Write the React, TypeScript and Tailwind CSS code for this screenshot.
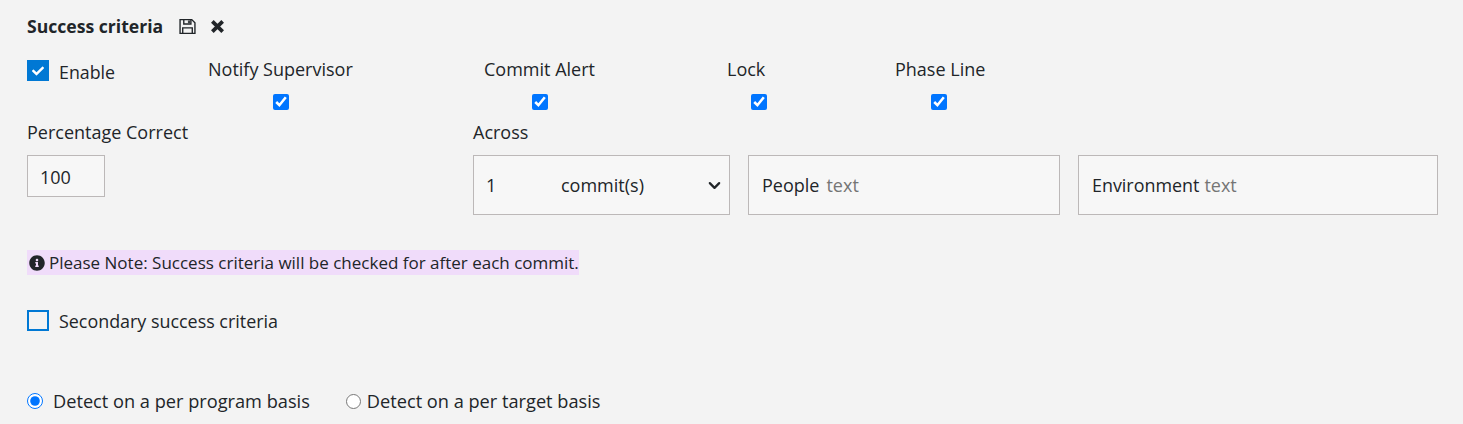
import { FaCheck, FaInfoCircle } from "react-icons/fa";

const flags = [
  { label: "Notify Supervisor", labelClass: "w-[276px]", boxClass: "ml-[65px]" },
  { label: "Commit Alert", labelClass: "w-[243px]", boxClass: "ml-[48px]" },
  { label: "Lock", labelClass: "w-[168px]", boxClass: "ml-[24px]" },
  { label: "Phase Line", labelClass: "w-[120px]", boxClass: "ml-[36px]" },
];

const App = () => {
  return (
    <main className="h-[424px] overflow-hidden bg-[#f3f3f3] pl-[27px] pr-[25px] pt-[13px] font-['Open_Sans',sans-serif] text-[18px] leading-[27px] text-[#212529]">
      <header className="flex items-center">
        <h1 className="text-[17.6px] font-bold">Success criteria</h1>
        <svg viewBox="0 0 16 16" className="ml-[16px] h-[17px] w-[17px]" fill="none" stroke="#212529" strokeWidth="1.3">
          <path d="M1 1.5h11l3 3v10H1z" />
          <path d="M4.5 1.5v4.2h6.7V1.5" />
          <path d="M3.5 14.5V9.3h9v5.2" />
          <path d="M8.8 2.6h1.3v2H8.8z" fill="#212529" strokeWidth="0.5" />
        </svg>
        <svg viewBox="0 0 16 16" className="ml-[14px] h-[15px] w-[15px]" fill="none" stroke="#212529" strokeWidth="4" strokeLinejoin="round">
          <path d="M2.5 2.5l11 11M13.5 2.5l-11 11" />
        </svg>
      </header>

      <section className="mt-[20px] flex">
        <label className="flex h-[21px] w-[181px] items-center">
          <span className="flex h-[21px] w-[22px] items-center justify-center bg-[#0078d4]">
            <FaCheck className="h-[12px] w-[12px] text-white" />
          </span>
          <span className="ml-[10px] mt-[3px] text-[17.8px]">Enable</span>
        </label>
        {flags.map((flag) => (
          <div key={flag.label} className={`-mt-[4px] flex flex-col ${flag.labelClass}`}>
            <span>{flag.label}</span>
            <input
              type="checkbox"
              checked
              readOnly
              className={`mt-[11px] h-4 w-4 accent-[#0075ff] ${flag.boxClass}`}
            />
          </div>
        ))}
      </section>

      <section className="mt-[9px] flex">
        <div className="w-[446px]">
          <span className="block">Percentage Correct</span>
          <input
            value="100"
            readOnly
            className="mt-[9px] h-[42px] w-[78px] border border-[#bcb8b8] bg-[#f7f7f7] pl-[12px] pt-[2px] outline-none"
          />
        </div>
        <div>
          <span className="block">Across</span>
          <div className="mt-[9px] flex gap-[18px]">
            <div className="flex h-[60px] w-[257px] items-center border border-[#bcb8b8] bg-[#f7f7f7] pl-[12px] pr-[7px]">
              <span className="w-[75px]">1</span>
              <span>commit(s)</span>
              <svg viewBox="0 0 16 16" className="ml-auto h-[15px] w-[15px]" fill="none" stroke="#212529" strokeWidth="2.4" strokeLinecap="round" strokeLinejoin="round">
                <path d="M3 5.5l5 5 5-5" />
              </svg>
            </div>
            <div className="flex h-[60px] w-[312px] items-center border border-[#bcb8b8] bg-[#f7f7f7] pl-[13px]">
              <span>People</span>
              <span className="ml-[7px] mt-[1px] text-[#757575]">text</span>
            </div>
            <div className="flex h-[60px] w-[360px] items-center border border-[#bcb8b8] bg-[#f7f7f7] pl-[13px]">
              <span className="text-[17.9px]">Environment</span>
              <span className="ml-[5px] mt-[1px] text-[#757575]">text</span>
            </div>
          </div>
        </div>
      </section>

      <p className="mt-[35px] flex h-[25px] w-[552px] items-center bg-[#f0dcfa] pl-[2px] text-[17px]">
        <FaInfoCircle className="mr-[4px] h-[16px] w-[16px]" />
        Please Note: Success criteria will be checked for after each commit.
      </p>

      <label className="mt-[35px] flex h-[21px] items-center">
        <span className="h-[21px] w-[22px] border-2 border-[#0078d4]" />
        <span className="ml-[10px] mt-[1px] text-[17.9px]">Secondary success criteria</span>
      </label>

      <div className="mt-[56px] flex items-center text-[18.2px]">
        <input type="radio" name="detect" checked readOnly className="m-0 h-4 w-4 accent-[#0075ff]" />
        <span className="ml-[10px] mt-[1px]">Detect on a per program basis</span>
        <input type="radio" name="detect2" readOnly className="m-0 ml-[36px] h-[15px] w-[15px]" />
        <span className="ml-[6px] mt-[1px]">Detect on a per target basis</span>
      </div>
    </main>
  );
};

export default App;
